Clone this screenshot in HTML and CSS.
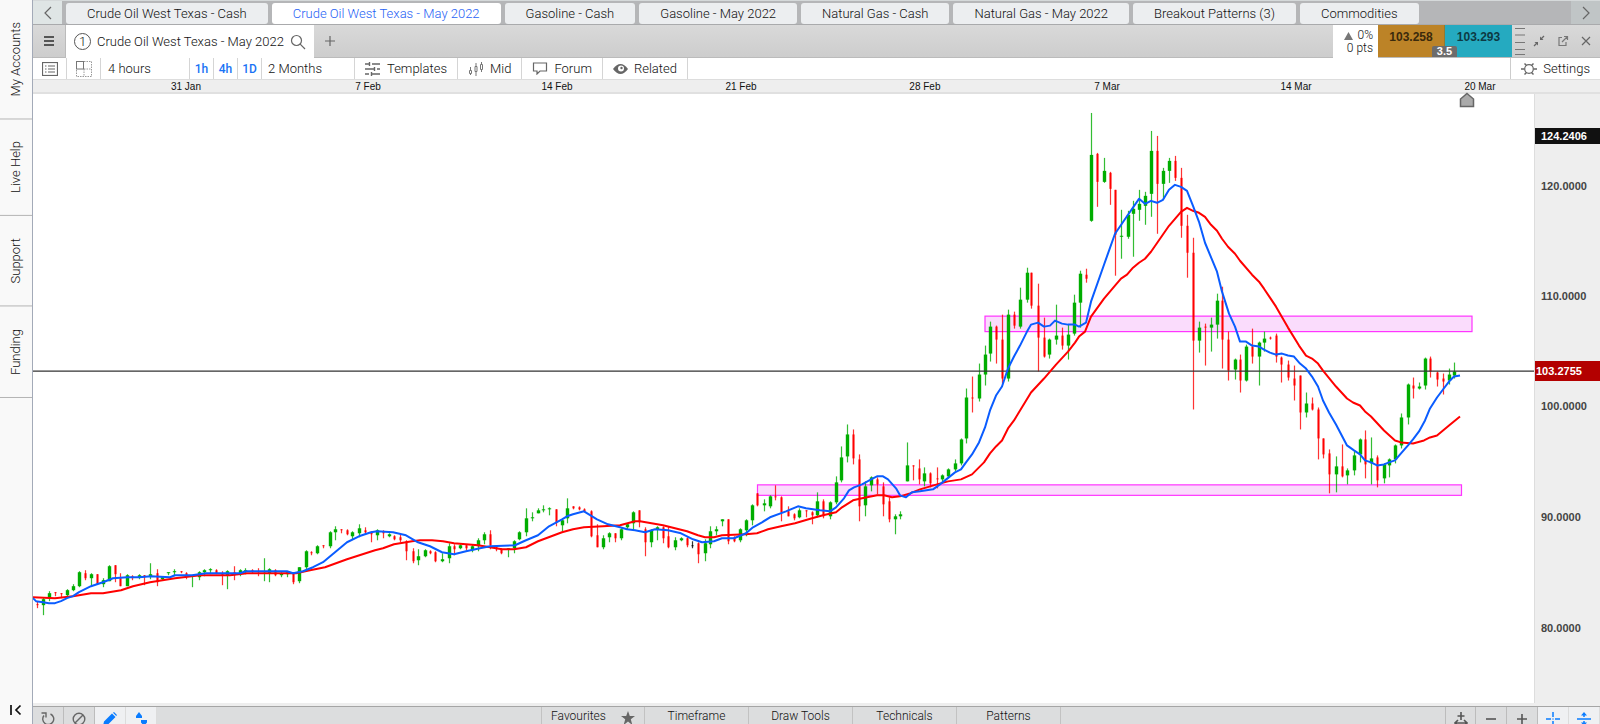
FILE: index.html
```html
<!DOCTYPE html>
<html lang="en">
<head>
<meta charset="utf-8">
<title>Crude Oil West Texas - May 2022</title>
<link rel="stylesheet" href="styles.css">
</head>
<body>
<div class="app">
  <aside class="side">
    <button class="side-item">My Accounts</button>
    <button class="side-item">Live Help</button>
    <button class="side-item">Support</button>
    <button class="side-item">Funding</button>
    <button class="side-collapse" aria-label="Collapse">
      <svg width="12" height="12" viewBox="0 0 12 12"><path d="M1 1v10M10.500 1.500L6 6l4.500 4.500" stroke="#111" stroke-width="1.700" fill="none"/></svg>
    </button>
  </aside>
  <main class="main">
    <nav class="tabs">
      <button class="tabs-arrow" aria-label="Previous"><svg width="10" height="14" viewBox="0 0 10 14"><path d="M8 1L2 7l6 6" class="stroke"/></svg></button>
      <div class="tabs-list">
        <button class="tab">Crude Oil West Texas - Cash</button>
        <button class="tab tab-active">Crude Oil West Texas - May 2022</button>
        <button class="tab">Gasoline - Cash</button>
        <button class="tab">Gasoline - May 2022</button>
        <button class="tab">Natural Gas - Cash</button>
        <button class="tab">Natural Gas - May 2022</button>
        <button class="tab">Breakout Patterns (3)</button>
        <button class="tab">Commodities</button>
      </div>
      <button class="tabs-arrow tabs-next" aria-label="Next"><svg width="10" height="14" viewBox="0 0 10 14"><path d="M2 1l6 6-6 6" class="stroke"/></svg></button>
    </nav>
    <header class="title">
      <button class="menu" aria-label="Menu"><svg width="12" height="12" viewBox="0 0 12 12"><path d="M1 2h10M1 6h10M1 10h10" stroke="#555" stroke-width="2"/></svg></button>
      <div class="title-tab">
        <span class="num">1</span>
        <span>Crude Oil West Texas - May 2022</span>
        <svg width="16" height="16" viewBox="0 0 16 16"><circle cx="6.500" cy="6.500" r="5" class="stroke"/><path d="M10.200 10.200L15 15" class="stroke"/></svg>
      </div>
      <button class="add" aria-label="Add chart"><svg width="12" height="12" viewBox="0 0 12 12"><path d="M6 1v10M1 6h10" class="stroke"/></svg></button>
      <div class="change"><span class="pct"><svg width="9" height="8" viewBox="0 0 9 8"><path d="M4.500 0L9 8H0z" fill="#777"/></svg> 0%</span><span>0 pts</span></div>
      <div class="deal">
        <button class="sell">103.258</button>
        <button class="buy">103.293</button>
        <span class="spread">3.5</span>
      </div>
      <div class="window">
        <svg class="handle" width="10" height="28" viewBox="0 0 10 28"><path d="M0 1.500h10M0 8h10M0 15.500h10M0 22.500h10M0 27.500h10" stroke="#777" stroke-width="1.200"/></svg>
        <button aria-label="Shrink"><svg width="12" height="12" viewBox="0 0 12 12"><path d="M7 1.500V5h3.500zM5 10.500V7H1.500z" fill="#666"/><path d="M7.500 4.500L11 1M4.500 7.500L1 11" stroke="#666" fill="none" stroke-width="1.300"/></svg></button>
        <button aria-label="Pop out"><svg width="12" height="12" viewBox="0 0 12 12"><path d="M5 2.500H2v8h7V7M5 7l5-5M7 1.500h3.500V5" stroke="#777" fill="none" stroke-width="1.200"/></svg></button>
        <button aria-label="Close"><svg width="10" height="10" viewBox="0 0 10 10"><path d="M1 1l8 8M9 1L1 9" stroke="#666" stroke-width="1.200"/></svg></button>
      </div>
    </header>
    <div class="tools">
      <button class="tool tool-icon" aria-label="List"><svg width="16" height="14" viewBox="0 0 16 14"><rect x=".5" y=".5" width="15" height="13" class="stroke"/><path d="M3 4h1.500M3 7h1.500M3 10h1.500M6 4h7M6 7h7M6 10h7" class="stroke"/></svg></button>
      <button class="tool tool-icon" aria-label="Layout"><svg width="16" height="16" viewBox="0 0 16 16"><rect x=".5" y=".5" width="7" height="7.500" fill="none" stroke="#777"/><path d="M8 .5h7.500v15H.5V8M8 8v7.500M8 8h7.500" fill="none" stroke="#999" stroke-dasharray="1.500 1"/></svg></button>
      <button class="tool tool-interval">4 hours</button>
      <button class="tool tool-quick">1h</button>
      <button class="tool tool-quick">4h</button>
      <button class="tool tool-quick">1D</button>
      <button class="tool tool-range">2 Months</button>
      <button class="tool tool-wide"><svg width="16" height="14" viewBox="0 0 16 14"><path d="M0 2h4M7 2h8M0 7h9M12 7h3M0 12h4M7 12h8M4.500 0v4M9.500 5v4M6.500 10v4" stroke="#666" stroke-width="1.400"/></svg>Templates</button>
      <button class="tool tool-wide"><svg width="16" height="14" viewBox="0 0 16 14"><path d="M2.500 5v3M2.500 12v1M8 1v3M8 10v4M13.500 0v2M13.500 8v2" stroke="#777"/><path d="M1.500 8.500h2v3h-2zM7 4.500h2v5H7zM12.500 2.500h2v5h-2z" fill="none" stroke="#777"/></svg>Mid</button>
      <button class="tool tool-wide"><svg width="16" height="13" viewBox="0 0 16 13"><path d="M1.500 1h13v8H8l-3 3V9H1.500z" class="stroke"/></svg>Forum</button>
      <button class="tool tool-wide"><svg width="15" height="10" viewBox="0 0 15 10"><path d="M0 5Q7.500-5 15 5Q7.500 15 0 5z" fill="#666"/><circle cx="8" cy="4.500" r="3" fill="#fff"/><circle cx="8.500" cy="4" r="1.200" fill="#666"/></svg>Related</button>
      <button class="tool tool-wide tool-settings"><svg width="16" height="14" viewBox="0 0 16 14"><circle cx="8" cy="7" r="4.300" class="stroke"/><path d="M0 7h3.500M12.500 7H16M3.500 1.500l2 2M12.500 1.500l-2 2M3.500 12.500l2-2M12.500 12.500l-2-2" stroke="#666" stroke-width="1.500"/></svg>Settings</button>
    </div>
    <div class="dates" id="dates"></div>
    <section class="chart">
      <svg class="plot" id="plot" viewBox="33 94 1501 610" preserveAspectRatio="none" role="img" aria-label="Crude oil price chart"></svg>
      <div class="prices" id="prices"></div>
      <svg class="marker" width="16" height="16" viewBox="0 0 16 16"><path d="M8 1.500L14.500 7v7.500h-13V7z" fill="#aaa" stroke="#666" stroke-width="1.500"/></svg>
    </section>
    <footer class="foot">
      <button class="foot-icon" aria-label="Reset"><svg width="14" height="14" viewBox="0 0 14 14"><path d="M9.500 2A5.500 5.500 0 1 1 3 3.500M.5 1H5v4.500" stroke="#666" stroke-width="1.400" fill="none"/></svg></button>
      <button class="foot-icon" aria-label="Clear"><svg width="14" height="14" viewBox="0 0 14 14"><circle cx="7" cy="7" r="5.800" stroke="#666" stroke-width="1.400" fill="none"/><path d="M3 11l8-8" stroke="#666" stroke-width="1.400"/></svg></button>
      <button class="foot-icon foot-on" aria-label="Draw"><svg width="14" height="14" viewBox="0 0 14 14"><path d="M0 14l1-4.500L9 1.500 12.500 5l-8 8zM10 .8L11 0l3 3-.8 1z" fill="#0a7cff"/></svg></button>
      <button class="foot-icon foot-on" aria-label="Order"><svg width="14" height="14" viewBox="0 0 14 14"><path d="M5 0l3 4v2H2V4zM7 8h6v2.500L10 14l-3-3.500z" fill="#0a7cff"/></svg></button>
      <div class="foot-mid">
        <button class="foot-tab foot-fav">Favourites<svg width="14" height="14" viewBox="0 0 14 14"><path d="M7 0l1.800 5H14l-4.200 3.200L11.300 14 7 10.500 2.700 14l1.500-5.800L0 5h5.200z" fill="#666"/></svg></button>
        <button class="foot-tab">Timeframe</button>
        <button class="foot-tab">Draw Tools</button>
        <button class="foot-tab">Technicals</button>
        <button class="foot-tab">Patterns</button>
      </div>
      <button class="foot-icon foot-first" aria-label="Fit width"><svg width="14" height="14" viewBox="0 0 14 14"><path d="M7 0v8M3.500 4h7M1 11h12M4 8l-3 3 3 3M10 8l3 3-3 3" stroke="#555" stroke-width="1.600" fill="none"/></svg></button>
      <button class="foot-icon" aria-label="Zoom out"><svg width="14" height="14" viewBox="0 0 14 14"><path d="M2 7h10" stroke="#555" stroke-width="1.600"/></svg></button>
      <button class="foot-icon" aria-label="Zoom in"><svg width="14" height="14" viewBox="0 0 14 14"><path d="M2 7h10M7 2v10" stroke="#555" stroke-width="1.600"/></svg></button>
      <button class="foot-icon foot-on" aria-label="Crosshair"><svg width="14" height="14" viewBox="0 0 14 14"><path d="M7 0v5M7 9v5M0 7h5M9 7h5M6.500 7h1" stroke="#0a7cff" stroke-width="1.500"/></svg></button>
      <button class="foot-icon foot-on" aria-label="Fit height"><svg width="14" height="14" viewBox="0 0 14 14"><path d="M0 7h14M7 2v3M7 9v3" stroke="#0a7cff" stroke-width="1.500"/><path d="M7 0l3 3.500H4zM7 14l3-3.500H4z" fill="#0a7cff"/></svg></button>
    </footer>
  </main>
</div>
<script src="chart.js"></script>
</body>
</html>
```
FILE: styles.css
```css
* { box-sizing: border-box; }
body { margin: 0; font-family: Roboto, "Liberation Sans", sans-serif; font-size: 13px; font-weight: 300; color: #111; background: #fff; }
button { margin: 0; padding: 0; border: 0; background: none; font: inherit; color: inherit; white-space: nowrap; }
svg { display: block; flex: none; }
.stroke { fill: none; stroke: #666; stroke-width: 1.2; }

.app { display: flex; height: 100vh; overflow: hidden; }
.side { display: flex; flex-direction: column; flex: none; width: 33px; background: #f9f9f9; border-right: 1px solid #a3aab8; }
.side-item { writing-mode: vertical-rl; transform: rotate(180deg); width: 32px; padding: 22px 0; border-top: 1px solid #b5b5b5; font-size: 13px; line-height: 32px; }
.side-collapse { margin-top: auto; padding: 0 10px 8px; }

.main { display: flex; flex-direction: column; flex: 1; min-width: 0; }
.tabs { display: flex; flex: none; height: 25px; background: #b5b6b8; border-top: 1px solid #d5d9da; border-bottom: 1px solid #a9aaac; }
.tabs-arrow { display: grid; place-items: center; width: 29px; background: #dfe5e5; }
.tabs-next { background: #c0c5c6; }
.tabs-list { display: flex; flex: 1; gap: 4px; padding: 2px 4px 0; min-width: 0; }
.tab { height: 21px; padding: 0 21px; border-radius: 3px; background: #eceef0; line-height: 21px; }
.tab-active { background: #fff; color: #1f62f5; }

.title { display: flex; flex: none; height: 33px; background: linear-gradient(#d9d9d9, #cdcdcd); border-bottom: 1px solid #bbb; }
.menu { display: grid; place-items: center; width: 33px; border-right: 1px solid #bbb; }
.title-tab { display: flex; align-items: center; gap: 6px; height: 33px; padding: 0 8px; background: #fff; }
.num { width: 17px; height: 17px; border: 1px solid #555; border-radius: 50%; line-height: 15px; text-align: center; }
.add { display: grid; place-items: center; width: 33px; }
.change { display: flex; flex-direction: column; align-items: flex-end; width: 45px; height: 33px; margin-left: auto; padding: 4px 5px 0 0; background: #fff; font-size: 12px; line-height: 13px; }
.pct { display: flex; align-items: center; gap: 4px; }
.deal { position: relative; display: flex; font-family: "Liberation Sans", sans-serif; font-weight: 700; }
.sell, .buy { width: 67px; padding-bottom: 8px; background: #bc8327; color: #3b2a0c; font-size: 12px; }
.sell { border-right: 1px solid #8e7a35; }
.buy { background: #25aac0; color: #0d3a44; }
.spread { position: absolute; bottom: 0; left: 50%; width: 25px; margin-left: -13px; border-radius: 2px 2px 0 0; background: #6c6c6c; color: #fff; font-size: 11px; line-height: 11px; text-align: center; }
.window { display: flex; align-items: center; gap: 12px; width: 88px; padding: 0 8px 0 3px; }
.handle { margin-right: -4px; }

.tools { display: flex; flex: none; height: 21px; background: #fff; }
.tool { display: flex; align-items: center; border-right: 1px solid #d5d5d5; }
.tool-icon { justify-content: center; width: 34px; }
.tool-interval { width: 89px; padding-left: 7px; }
.tool-quick { justify-content: center; width: 24px; color: #1a73f5; font-size: 12px; font-weight: 500; }
.tool-range { width: 93px; padding-left: 6px; }
.tool-wide { gap: 6px; padding: 0 10px; }
.tool-settings { margin-left: auto; border-right: 0; border-left: 1px solid #ccc; }

.dates { position: relative; flex: none; height: 15px; background: #eee; border-top: 1px solid #ddd; border-bottom: 2px solid #e0e0e0; font-family: "Liberation Sans", sans-serif; font-size: 10px; line-height: 13px; }
.date { position: absolute; top: 0; transform: translateX(-50%); }

.chart { position: relative; display: flex; flex: 1; min-height: 0; border-bottom: 3px solid #eee; }
.plot { flex: 1; width: 0; height: 100%; }
.prices { position: relative; flex: none; width: 66px; background: #eee; border-left: 1px solid #ddd; font-family: "Liberation Sans", sans-serif; font-size: 11px; font-weight: 700; color: #444; }
.price { position: absolute; left: 0; right: 0; padding-left: 6px; line-height: 16px; transform: translateY(-50%); }
.price-high { background: #111; color: #fff; }
.price-now { padding-left: 1px; background: #b30000; color: #fff; line-height: 20px; }
.marker { position: absolute; top: -2px; right: 125px; }

.foot { display: flex; flex: none; height: 18px; overflow: hidden; background: #dcddde; border-top: 1px solid #a5a5a5; font-size: 12px; line-height: 16px; }
.foot-icon { display: flex; flex: none; justify-content: center; align-items: center; width: 31px; height: 24px; border-right: 1px solid #bcbcbc; }
.foot-on { background: #eff0f2; border-color: #dcdcdc; }
.foot-first { border-left: 1px solid #bcbcbc; }
.foot-mid { display: flex; flex: 1; justify-content: center; }
.foot-tab { display: flex; justify-content: center; align-items: flex-start; width: 104px; padding-top: 2px; border-right: 1px solid #c2c2c2; line-height: 15px; }
.foot-fav { justify-content: space-between; padding: 2px 9px 0; border-left: 1px solid #c2c2c2; }
.foot-fav svg { margin-top: 2px; }
```
FILE: chart.js
```js
// Candles: x, high, body top, body bottom, low, colour
const candles = `37 602 605 606 609 r;43 598 600 606 616 g;49 592 594 599 602 g;55 593 593 594 597 r;61 594 594 595 599 r;67 590 591 596 598 g;73 585 587 591 592 g;79 572 573 587 588 g;85 571 574 579 581 r;91 574 575 579 586 g;97 575 575 585 585 r;103 579 581 585 588 g;109 566 567 582 582 g;115 566 566 575 583 r;120 574 579 587 587 r;127 575 576 587 587 g;132 576 577 579 581 r;139 575 576 578 580 g;144 576 576 578 586 r;150 564 575 577 580 g;157 570 574 583 587 r;162 577 578 580 581 g;168 573 573 574 576 g;174 570 572 573 577 g;181 572 572 573 574 r;186 573 574 576 580 r;192 576 576 577 588 g;199 572 573 578 581 g;204 570 571 573 577 g;210 569 570 571 575 g;216 570 571 574 575 r;222 572 574 576 586 r;227 571 572 576 590 g;234 567 573 576 581 r;240 570 571 574 577 g;245 569 571 573 575 g;252 570 571 573 574 r;258 569 572 573 577 r;264 559 572 573 582 g;269 569 570 574 583 g;275 570 571 576 577 r;281 573 574 576 578 g;287 572 573 575 578 g;293 573 574 583 585 r;299 568 568 582 584 g;306 551 552 568 572 g;311 552 553 554 556 r;317 546 547 554 555 g;323 546 546 547 549 r;330 532 533 547 549 g;335 527 530 533 541 g;341 530 530 531 534 r;347 530 531 535 536 r;352 532 533 537 540 g;359 525 529 534 538 g;365 528 531 533 535 r;371 532 533 535 543 r;377 530 531 536 541 g;383 531 532 534 539 r;389 534 535 537 538 g;394 536 537 540 541 r;400 535 538 541 543 r;406 541 542 552 561 r;413 549 552 562 564 r;418 550 557 561 566 g;425 550 551 557 558 g;430 551 552 554 555 r;435 552 553 562 563 r;442 554 560 562 563 g;449 544 547 559 564 g;454 545 547 550 556 r;460 545 546 549 550 g;466 545 546 549 551 r;472 545 547 551 553 g;478 539 541 547 552 g;484 533 535 541 545 g;490 531 535 546 550 r;496 547 548 550 552 r;501 549 550 554 555 r;508 549 549 550 558 g;514 541 542 549 554 g;519 532 533 540 541 g;526 509 519 533 537 g;532 513 518 519 522 g;538 509 511 514 514 g;543 506 510 511 513 g;549 508 509 510 516 g;556 510 510 523 527 r;562 520 521 526 532 g;567 499 509 519 524 g;573 507 507 509 510 r;579 507 508 510 511 r;584 509 510 512 513 r;591 511 512 537 538 r;597 525 536 548 548 r;603 536 539 548 550 g;609 533 534 538 543 g;615 534 534 539 543 r;621 529 530 539 541 g;627 524 525 528 530 g;633 512 513 524 531 g;639 511 511 523 528 r;645 528 530 543 557 r;651 530 531 543 548 g;657 527 528 530 541 g;663 527 528 539 544 r;668 527 537 548 549 r;675 538 541 548 551 g;681 538 539 541 542 g;687 538 539 546 548 r;692 542 546 547 549 k;698 543 544 555 564 r;705 540 544 554 562 g;710 527 532 545 549 g;716 527 530 532 536 g;722 520 520 522 527 g;728 520 520 542 545 r;734 537 538 542 543 r;740 529 530 541 543 g;746 520 521 531 537 g;752 505 506 521 526 g;757 494 494 506 507 r;764 500 504 506 512 g;770 496 497 507 509 g;775 486 497 498 501 r;781 497 498 513 522 r;788 507 512 517 517 r;794 514 515 519 521 r;799 509 511 518 519 g;806 511 511 512 518 r;812 512 513 516 525 r;817 493 502 516 518 g;823 500 502 517 519 r;830 502 503 517 520 g;836 477 483 503 505 g;841 447 458 481 483 g;847 425 435 457 463 g;853 430 435 459 465 r;859 455 460 507 522 r;865 482 487 506 517 g;871 477 478 486 492 g;877 478 480 485 495 r;883 483 487 505 517 r;889 498 502 520 523 r;895 515 517 520 535 g;900 512 515 517 520 g;907 443 466 482 482 g;913 466 466 467 481 r;919 460 469 480 485 r;924 468 474 482 487 g;930 473 474 484 488 r;937 468 479 480 489 r;942 475 476 480 484 g;948 469 470 477 479 g;955 460 464 470 472 g;961 439 440 464 466 g;966 389 398 439 444 g;972 377 398 399 413 r;979 364 375 399 402 g;985 346 355 375 386 g;990 322 327 354 362 g;996 326 327 340 364 r;1002 315 340 379 384 r;1008 310 315 379 382 g;1014 312 315 326 329 r;1020 288 300 327 329 g;1027 268 273 300 303 g;1031 273 273 306 309 r;1038 284 306 338 372 r;1044 318 338 357 358 r;1049 339 340 355 359 g;1056 305 336 340 345 g;1062 328 336 346 350 r;1068 325 335 346 360 g;1074 295 303 334 336 g;1080 271 274 303 328 g;1086 269 275 279 283 r;1091 113 155 221 222 g;1097 153 154 182 207 r;1104 158 171 182 183 g;1110 172 173 189 205 r;1115 190 190 235 276 r;1121 210 236 237 259 g;1128 211 215 237 239 g;1133 201 209 214 257 g;1139 190 204 210 221 g;1145 192 196 206 225 g;1151 131 151 194 217 g;1157 136 151 184 234 r;1163 168 171 184 199 g;1169 158 161 171 183 g;1175 156 161 178 181 r;1181 168 178 226 238 r;1187 215 226 253 278 r;1193 238 253 341 410 r;1199 322 328 341 353 g;1205 324 327 328 366 r;1211 318 325 328 352 g;1217 294 301 325 339 g;1222 287 301 340 369 r;1228 332 340 371 381 r;1235 359 360 370 380 g;1240 355 360 381 393 r;1246 345 347 381 382 g;1252 329 347 357 364 r;1259 342 343 357 386 g;1264 332 339 343 352 g;1270 337 338 339 340 r;1276 334 336 357 363 r;1281 357 358 365 383 r;1288 361 365 378 381 r;1294 366 379 386 401 r;1300 376 376 413 430 r;1306 393 404 413 418 g;1312 398 404 410 411 r;1318 408 410 439 460 r;1323 439 439 455 459 r;1329 450 454 475 494 r;1336 457 467 475 493 g;1342 445 467 477 478 r;1347 469 471 476 485 g;1354 451 456 471 476 g;1360 439 440 455 463 g;1365 431 440 465 479 r;1371 438 459 464 485 g;1377 456 458 481 488 r;1384 464 465 479 484 g;1389 459 460 466 478 g;1395 445 446 460 464 g;1401 414 418 446 449 g;1408 384 385 418 425 g;1413 378 386 389 399 r;1419 383 387 389 390 g;1425 358 359 386 390 g;1430 357 359 372 378 r;1437 372 373 380 387 r;1443 374 379 382 395 r;1449 369 375 381 385 g;1454 363 372 376 379 g`;

const fastAverage = '33,599 36,602 43,603 49,604 55,604 61,602 67,599 73,597 79,593 91,587 103,583 113,579 127,578 139,578 151,577 170,578 175,576 192,576 206,574 240,574 246,572 287,572 293,574 303,572 313,568 323,563 335,553 347,543 359,537 371,533 377,532 393,533 406,536 418,543 430,547 442,553 454,555 466,552 480,549 490,547 515,546 526,541 538,536 549,527 562,520 567,517 573,515 584,512 597,520 608,525 620,528 627,530 635,531 645,533 655,530 668,531 681,534 693,540 702,543 714,542 722,539 734,539 746,534 753,528 762,523 770,518 786,512 798,507 806,509 820,511 830,512 836,508 844,499 849,491 854,488 862,485 873,479 877,477 883,477 888,480 896,489 900,496 906,498 912,493 920,492 933,490 940,485 955,473 961,470 966,463 972,455 979,443 985,428 990,411 996,396 1002,387 1008,369 1014,357 1020,346 1027,332 1031,325 1038,323 1044,327 1050,326 1055,321 1062,324 1068,325 1075,325 1079,327 1086,323 1091,302 1104,265 1115,234 1128,215 1139,199 1145,204 1151,201 1157,203 1163,200 1169,190 1175,185 1181,187 1187,191 1193,206 1199,222 1205,243 1217,272 1222,292 1229,314 1235,327 1240,342 1246,342 1252,346 1259,347 1264,350 1270,353 1276,355 1282,354 1288,356 1294,357 1300,364 1306,369 1312,377 1318,387 1323,401 1329,413 1336,425 1347,446 1354,451 1360,455 1365,461 1371,463 1377,466 1384,465 1389,463 1395,461 1401,454 1408,446 1413,440 1419,432 1425,421 1430,409 1437,398 1443,390 1449,382 1454,377 1460,376';
const slowAverage = '33,598 55,599 73,597 91,594 103,594 121,591 133,587 150,583 175,579 200,576 230,576 247,574 296,574 310,571 325,568 347,560 375,551 383,549 394,545 412,542 420,541 432,541 443,542 454,544 466,545 478,546 490,548 502,550 514,550 526,548 538,542 562,533 573,530 584,528 603,527 620,526 635,522 640,522 663,526 687,532 698,536 705,538 714,538 722,536 746,535 757,534 768,530 781,527 795,524 812,519 823,516 836,513 842,508 853,501 862,499 877,496 884,496 892,498 900,497 910,494 920,490 937,485 948,482 961,480 972,475 984,463 990,454 996,447 1002,441 1008,429 1014,421 1031,393 1044,379 1056,365 1068,352 1075,343 1079,337 1085,332 1091,317 1104,299 1115,286 1121,279 1127,275 1133,268 1139,263 1145,259 1151,252 1169,226 1181,212 1187,208 1193,211 1199,213 1205,217 1211,225 1217,231 1222,239 1228,247 1235,254 1240,261 1252,275 1259,282 1264,289 1276,307 1288,328 1299,346 1306,356 1312,359 1318,364 1323,371 1336,387 1347,399 1353,403 1360,406 1365,412 1371,417 1384,431 1395,441 1401,443 1413,444 1424,441 1430,438 1437,436 1449,426 1460,417';

const colours = { r: '#f00', g: '#00ad00', k: '#000' };
const zone = (x, y, w, h) =>
  `<rect x="${x}" y="${y}" width="${w}" height="${h}" fill="#fadcfc" stroke="#f3f" stroke-width="1.200"/>`;

let marks = zone(985, 316.5, 487, 15.5) + zone(757.5, 485.5, 704, 10.5);
for (const row of candles.split(';')) {
  const [x, high, top, bottom, low, kind] = row.split(' ');
  const width = kind === 'g' ? 3.4 : 2;
  const body = Math.max(1, bottom - top);
  marks += `<g fill="${colours[kind]}"><rect x="${x - 0.1}" y="${high}" width="1.200" height="${low - high}" opacity=".8"/>` +
    `<rect x="${+x + 0.5 - width / 2}" y="${top}" width="${width}" height="${body}"/></g>`;
}
marks += '<path d="M33 371.500H1534" stroke="#333" stroke-width="1.200"/>';
marks += `<polyline points="${slowAverage}" fill="none" stroke="#f00" stroke-width="2" stroke-linejoin="round"/>`;
marks += `<polyline points="${fastAverage}" fill="none" stroke="#0a5cff" stroke-width="2" stroke-linejoin="round"/>`;
document.getElementById('plot').innerHTML = marks;

const dates = [['31 Jan', 186], ['7 Feb', 368], ['14 Feb', 557], ['21 Feb', 741], ['28 Feb', 925], ['7 Mar', 1107], ['14 Mar', 1296], ['20 Mar', 1480]];
document.getElementById('dates').innerHTML = dates
  .map(([text, x]) => `<span class="date" style="left:${((x - 33) / 15.67).toFixed(2)}%">${text}</span>`).join('');

const prices = [['124.2406', 136, 'price-high'], ['120.0000', 186, ''], ['110.0000', 296, ''], ['103.2755', 371, 'price-now'], ['100.0000', 407, ''], ['90.0000', 518, ''], ['80.0000', 629, '']];
document.getElementById('prices').innerHTML = prices
  .map(([text, y, kind]) => `<span class="price ${kind}" style="top:${((y - 94) / 6.1).toFixed(2)}%">${text}</span>`).join('');
```
